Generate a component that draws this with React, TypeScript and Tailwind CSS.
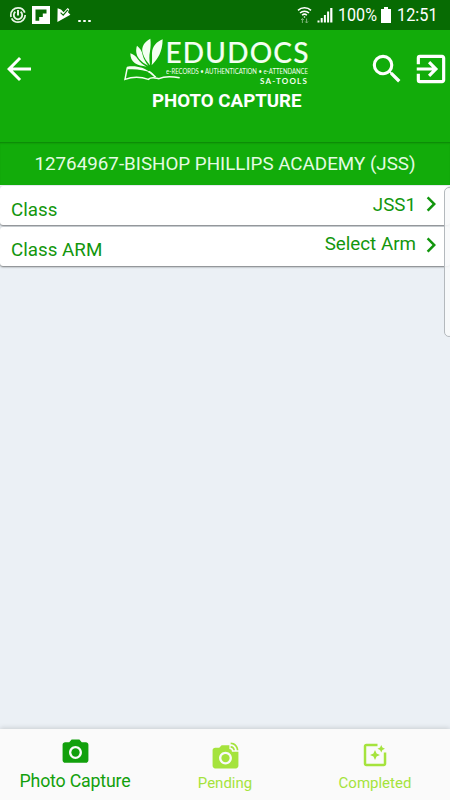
import {
  MdArrowBack,
  MdSearch,
  MdExitToApp,
  MdChevronRight,
  MdPhotoCamera,
  MdLinkedCamera,
  MdPhotoFilter,
} from "react-icons/md";

function StatusBar() {
  return (
    <div className="flex h-[30px] shrink-0 items-center bg-[#076b03] text-white">
      <svg className="ml-[9px] h-[18px] w-[18px]" viewBox="0 0 18 18" fill="none" stroke="#e8f5e6">
        <circle cx="9" cy="9" r="7.2" strokeWidth="1.7" strokeDasharray="19 1.5 22 3.4" />
        <path d="M6.4 5.8a4.2 4.2 0 1 0 5.2 0" strokeWidth="1.8" />
        <path d="M9 4v5.5" strokeWidth="2" />
      </svg>
      <svg className="ml-[5px] h-[18px] w-[18px]" viewBox="0 0 18 18">
        <path d="M0 0h18v18H0z" fill="#fff" />
        <path d="M3.5 3.5h11v4h-3.7v3.6H7.2v3.6H3.5z" fill="#076b03" />
      </svg>
      <svg className="ml-[7px] h-[16px] w-[14px]" viewBox="0 0 14 16">
        <path d="M.6 1.2 4 2.6l2.6 2.6L10.6 1l1.6 1.2-1.2 3 2.4 2.6L.4 15z" fill="#fff" />
        <path d="m3.6 5.6 2.6 2.6 4.6-5.4" fill="none" stroke="#076b03" strokeWidth="1.2" />
      </svg>
      <div className="ml-[7px] flex gap-[2.4px] pt-[12px]">
        <span className="h-[2.6px] w-[2.8px] rounded-full bg-white" />
        <span className="h-[2.6px] w-[2.8px] rounded-full bg-white" />
        <span className="h-[2.6px] w-[2.8px] rounded-full bg-white" />
      </div>

      <div className="ml-auto flex items-center pr-[13px]">
        <svg className="mr-[5px] h-[18px] w-[15px]" viewBox="0 0 15 18" fill="none" stroke="#fff" strokeWidth="1.5">
          <path d="M1 4.4a9.4 9.4 0 0 1 13 0M3 7a6.4 6.4 0 0 1 9 0M5.1 9.3a3.4 3.4 0 0 1 4.8 0" />
          <circle cx="7.5" cy="11" r=".8" fill="#fff" stroke="none" />
          <path d="M5.4 17v-4.4M4 14l1.4-1.5L6.8 14M9.6 12.5V17M8.2 15.5 9.6 17l1.4-1.5" stroke="#7fb27b" strokeWidth="1" />
        </svg>
        <svg className="mr-[5px] h-[16px] w-[16px]" viewBox="0 0 16 16" fill="#fff">
          <path d="M.5 13.5h2v2h-2zM3.7 11h2v4.5h-2zM6.9 8h2v7.5h-2zM10.1 4.5h2v11h-2zM13.2 1h2.2v14.5h-2.2z" />
        </svg>
        <div className="w-[40px] pt-[2px]">
          <span className="inline-block origin-left scale-x-[0.87] text-[18.5px] leading-5">100%</span>
        </div>
        <svg className="mr-[6px] ml-[3px] h-[16px] w-[10px]" viewBox="0 0 10 16" fill="#fff">
          <path d="M3 0h4v2h3v14H0V2h3z" />
        </svg>
        <div className="w-[40px] pt-[2px]">
          <span className="inline-block origin-left scale-x-[0.88] text-[18.5px] leading-5">12:51</span>
        </div>
      </div>
    </div>
  );
}

function Logo() {
  return (
    <div className="flex h-[55px] w-[185px] text-[#f4fff2]">
      <svg className="mt-[4px] -ml-[4px] h-[54px] w-[64px] shrink-0" viewBox="0 0 192 162" fill="currentColor">
        <path d="M128 16C110 23 97 37 96 57c0 13 1 27-1 37 19-20 32-38 33-78z" />
        <path d="M91 14C73 24 63 38 68 57c4 15 13 26 22 37-2-17-3-27 0-42 2-13 3-25 1-38z" />
        <path d="M51 35c-5 15-2 28 6 39 7 9 17 15 28 21-8-10-14-20-17-32-2-12-8-21-17-28z" />
        <path d="M31 58c0 13 4 23 14 30 9 6 21 8 35 10-12-6-20-13-27-23-5-8-12-14-22-17z" />
        {/* open book under the leaves */}
        <path
          d="M22 100 15 136c24-9 48-8 70 0 10-9 22-3 32-2 12-6 32-8 62-3"
          fill="none"
          stroke="currentColor"
          strokeWidth="4.5"
        />
        <path d="M21 98c25-4 51 1 72 19-21-10-45-13-72-11z" />
        <path d="M88 110c8 4 14 12 21 18l-5 3c-6-6-12-12-20-16z" />
      </svg>
      <div className="-ml-[18.5px] flex w-[145px] shrink-0 flex-col font-[Lato,sans-serif]">
        <div className="mt-[8px] h-[29px] whitespace-nowrap text-[28px] leading-[28px] font-medium tracking-[1.2px] [-webkit-text-stroke:0.15px_currentColor]">
          EDUDOCS
        </div>
        <div className="h-[9px] w-[145px]">
          <span className="block w-max origin-left scale-x-[0.88] whitespace-nowrap text-[6.8px] leading-[9px]">
            e-RECORDS • AUTHENTICATION • e-ATTENDANCE
          </span>
        </div>
        <div className="pt-px pl-[94.5px] whitespace-nowrap text-[8px] leading-[8px] font-bold tracking-[1.2px]">
          SA-TOOLS
        </div>
      </div>
    </div>
  );
}

function Header() {
  return (
    <header className="flex h-[112px] shrink-0 bg-[#12ac0a] text-white">
      <div className="w-[124px] pt-[21px] pl-px">
        <MdArrowBack size={36} />
      </div>
      <div className="flex w-[206px] flex-col">
        <Logo />
        <h1 className="mt-[4px] ml-[28px] whitespace-nowrap text-[18.7px] leading-6 font-bold">PHOTO CAPTURE</h1>
      </div>
      <div className="ml-auto flex gap-[6px] pt-[20px]">
        <MdSearch size={38} />
        <MdExitToApp size={38} />
      </div>
    </header>
  );
}

function SelectRow({
  label,
  value,
  labelClass,
  valueClass,
  iconClass,
}: {
  label: string;
  value: string;
  labelClass: string;
  valueClass: string;
  iconClass: string;
}) {
  return (
    <div className="flex h-[39px] justify-between rounded-[3px] bg-white pr-[4px] pl-[11px] text-[18.8px] leading-6 text-[#12960d] shadow-[0_1px_2px_rgba(0,0,0,0.5)]">
      <span className={labelClass}>{label}</span>
      <div className="flex">
        <span className={valueClass}>{value}</span>
        <MdChevronRight size={30} className={iconClass} />
      </div>
    </div>
  );
}

export default function App() {
  return (
    <div className="relative flex h-[800px] w-[450px] flex-col overflow-hidden bg-[#ebf0f5] font-[Roboto,sans-serif]">
      <StatusBar />
      <Header />
      <div className="flex h-[43px] shrink-0 items-center justify-center bg-[#12ac0a] pt-[2px] text-[18.8px] text-[#e4fbe2] shadow-[inset_0_2px_2px_-1px_rgba(0,70,0,0.4)]">
        <span className="whitespace-nowrap">12764967-BISHOP PHILLIPS ACADEMY (JSS)</span>
      </div>
      <main className="flex flex-1 flex-col gap-[1.5px] pt-px">
        <SelectRow label="Class" value="JSS1" labelClass="pt-[12px]" valueClass="pt-[7px]" iconClass="mt-[3px]" />
        <SelectRow
          label="Class ARM"
          value="Select Arm"
          labelClass="pt-[11px]"
          valueClass="pt-[5px]"
          iconClass="mt-[3px]"
        />
      </main>

      {/* edge panel handle */}
      <div className="absolute top-[187px] -right-[4px] h-[150px] w-[10px] rounded-[6px] border border-[#b4b9bd] bg-[#f8f9fb]/90" />

      <nav className="flex h-[71px] shrink-0 bg-[#fafafa] shadow-[0_-1px_5px_rgba(0,0,0,0.15)]">
        <div className="flex w-[150px] flex-col items-center pt-[8px] text-[#12a00c]">
          <MdPhotoCamera size={31} />
          <span className="mt-px text-[17.8px] leading-6 tracking-[-0.2px]">Photo Capture</span>
        </div>
        <div className="flex w-[150px] flex-col items-center pt-[11px] text-[#a5e33d]">
          <MdLinkedCamera size={31} />
          <span className="text-[15px] leading-6">Pending</span>
        </div>
        <div className="flex w-[150px] flex-col items-center pt-[11px] text-[#a5e33d]">
          <MdPhotoFilter size={30} />
          <span className="mt-px text-[15px] leading-6">Completed</span>
        </div>
      </nav>
    </div>
  );
}
